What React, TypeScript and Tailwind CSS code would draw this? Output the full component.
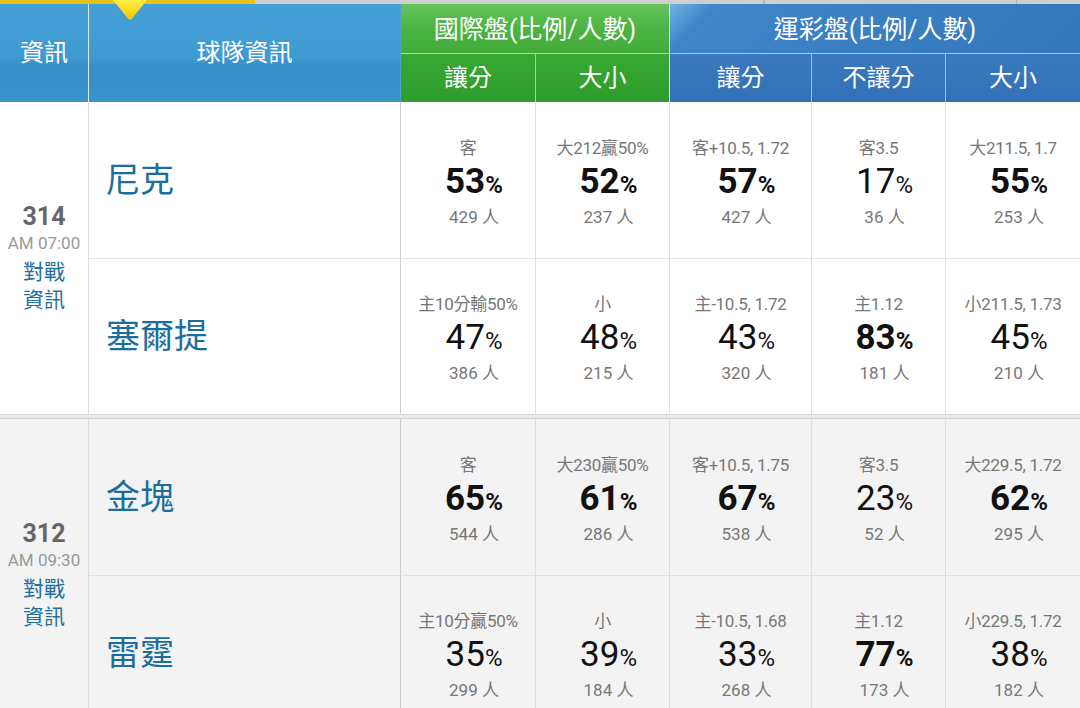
import React from "react";

type Cell = { label: string; pct: number; bold: boolean; count: number };
type Team = { name: string; cells: Cell[] };
type Match = { no: string; time: string; teams: Team[] };

const matches: Match[] = [
  {
    no: "314",
    time: "AM 07:00",
    teams: [
      {
        name: "尼克",
        cells: [
          { label: "客", pct: 53, bold: true, count: 429 },
          { label: "大212贏50%", pct: 52, bold: true, count: 237 },
          { label: "客+10.5, 1.72", pct: 57, bold: true, count: 427 },
          { label: "客3.5", pct: 17, bold: false, count: 36 },
          { label: "大211.5, 1.7", pct: 55, bold: true, count: 253 },
        ],
      },
      {
        name: "塞爾提",
        cells: [
          { label: "主10分輸50%", pct: 47, bold: false, count: 386 },
          { label: "小", pct: 48, bold: false, count: 215 },
          { label: "主-10.5, 1.72", pct: 43, bold: false, count: 320 },
          { label: "主1.12", pct: 83, bold: true, count: 181 },
          { label: "小211.5, 1.73", pct: 45, bold: false, count: 210 },
        ],
      },
    ],
  },
  {
    no: "312",
    time: "AM 09:30",
    teams: [
      {
        name: "金塊",
        cells: [
          { label: "客", pct: 65, bold: true, count: 544 },
          { label: "大230贏50%", pct: 61, bold: true, count: 286 },
          { label: "客+10.5, 1.75", pct: 67, bold: true, count: 538 },
          { label: "客3.5", pct: 23, bold: false, count: 52 },
          { label: "大229.5, 1.72", pct: 62, bold: true, count: 295 },
        ],
      },
      {
        name: "雷霆",
        cells: [
          { label: "主10分贏50%", pct: 35, bold: false, count: 299 },
          { label: "小", pct: 39, bold: false, count: 184 },
          { label: "主-10.5, 1.68", pct: 33, bold: false, count: 268 },
          { label: "主1.12", pct: 77, bold: true, count: 173 },
          { label: "小229.5, 1.72", pct: 38, bold: false, count: 182 },
        ],
      },
    ],
  },
];

const cols = "grid grid-cols-[89px_312px_135px_134px_142px_134px_134px]";

function StatCell({ c, last, top }: { c: Cell; last: boolean; top: boolean }) {
  return (
    <div
      className={`flex flex-col items-center justify-center pt-[5px] border-[#dedede] ${
        last ? "" : "border-r"
      } ${top ? "border-b border-b-[#e2e2e2]" : ""}`}
    >
      <div className="h-[22px] leading-[22px] text-[17px] text-[#777] whitespace-nowrap tracking-[-0.3px]">
        {c.label}
      </div>
      <div
        className={`h-[46px] leading-[46px] pl-3 text-[#111] whitespace-nowrap ${
          c.bold ? "font-bold" : "font-normal"
        }`}
      >
        <span className="text-[35px]">{c.pct}</span>
        <span className="text-[24px]">%</span>
      </div>
      <div className="h-[24px] leading-[24px] pl-3 text-[17px] text-[#777] whitespace-nowrap">
        {c.count} 人
      </div>
    </div>
  );
}

function MatchGroup({ m, shaded }: { m: Match; shaded: boolean }) {
  return (
    <div
      className={`${cols} grid-rows-[157px_155px] ${
        shaded ? "bg-[#f3f3f3]" : "bg-white"
      }`}
    >
      <div className="row-span-2 flex flex-col items-center justify-center border-r border-[#dcdcdc]">
        <div className="text-[25px] leading-[28px] font-bold text-[#666]">{m.no}</div>
        <div className="text-[17px] leading-[24px] text-[#999] whitespace-nowrap">{m.time}</div>
        <div className="mt-[3px] text-[21px] leading-[28px] text-[#1f6f9f] text-center">
          對戰
          <br />
          資訊
        </div>
      </div>
      {m.teams.map((t, ti) => (
        <React.Fragment key={t.name}>
          <div
            className={`flex items-center pl-[17px] border-r border-[#cfcfcf] ${
              ti === 0 ? "border-b border-b-[#e2e2e2]" : ""
            }`}
          >
            <span className="text-[34px] text-[#1b6d9b]">{t.name}</span>
          </div>
          {t.cells.map((c, ci) => (
            <StatCell key={ci} c={c} last={ci === 4} top={ti === 0} />
          ))}
        </React.Fragment>
      ))}
    </div>
  );
}

export default function App() {
  return (
    <div className="w-[1080px] h-[708px] overflow-hidden bg-white font-['Roboto','Noto_Sans_CJK_TC',sans-serif] relative">
      {/* top strip */}
      <div className="flex h-[4px]">
        <div className="w-[255px] bg-[#e5c21c]" />
        <div className="flex-1 bg-[#cfcfcf] border-r border-[#b5b5b5]" />
        <div className="w-[253px] bg-[#cfcfcf] border-l border-[#b5b5b5] border-r" />
        <div className="w-[63px] bg-[#cfcfcf]" />
      </div>

      {/* header */}
      <div className={`${cols} grid-rows-[50px_48px] text-white text-[24px]`}>
        <div className="row-span-2 flex items-center justify-center border-r border-[#d6ebf7] bg-[linear-gradient(180deg,#44a0d6_0%,#3f9ad1_55%,#3890c9_62%,#3a92cb_100%)]">
          資訊
        </div>
        <div className="row-span-2 flex items-center justify-center border-r border-[#4f9fd0] bg-[linear-gradient(180deg,#44a0d6_0%,#3f9ad1_55%,#3890c9_62%,#3a92cb_100%)]">
          球隊資訊
        </div>
        <div className="col-span-2 flex items-center justify-center pt-[3px] text-[25px] border-b border-[#a9dca6] border-r border-r-[#cde6f3] bg-[linear-gradient(180deg,#66c25a_0%,#4cb442_50%,#42ab39_100%)]">
          國際盤(比例/人數)
        </div>
        <div className="col-span-3 flex items-center justify-center pt-[3px] text-[25px] border-b border-[#a6c8e8] bg-[linear-gradient(135deg,#6fb2e2_0%,#3f86c8_10%,#3a7ec2_50%,#3577bd_100%)]">
          運彩盤(比例/人數)
        </div>
        <div className="flex items-center justify-center border-r border-[#9fd89b] bg-[linear-gradient(180deg,#38a834_0%,#2e9c2b_100%)]">
          讓分
        </div>
        <div className="flex items-center justify-center border-r border-[#cde6f3] bg-[linear-gradient(180deg,#38a834_0%,#2e9c2b_100%)]">
          大小
        </div>
        <div className="flex items-center justify-center border-r border-[#9dbfe2] bg-[linear-gradient(180deg,#3a79bd_0%,#3371b6_100%)]">
          讓分
        </div>
        <div className="flex items-center justify-center border-r border-[#9dbfe2] bg-[linear-gradient(180deg,#3a79bd_0%,#3371b6_100%)]">
          不讓分
        </div>
        <div className="flex items-center justify-center bg-[linear-gradient(180deg,#3a79bd_0%,#3371b6_100%)]">
          大小
        </div>
      </div>

      {/* yellow pointer */}
      <div className="absolute left-[113px] top-0 w-[34px] h-[20px] bg-[linear-gradient(180deg,#fff04a_0%,#f5c400_100%)] [clip-path:polygon(0_0,100%_0,55%_95%,50%_100%,45%_95%)]" />

      {/* body */}
      <MatchGroup m={matches[0]} shaded={false} />
      <div className="h-[5px] border-y border-[#d5d5d5] bg-[#ebebeb]" />
      <MatchGroup m={matches[1]} shaded={true} />
    </div>
  );
}
